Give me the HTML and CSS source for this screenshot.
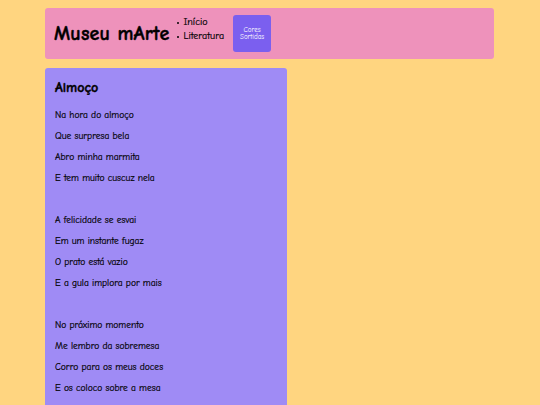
FILE: index.html
```html
<!DOCTYPE html>
<html lang="pt-BR">
<head>
<meta charset="utf-8">
<title>Museu mArte</title>
<link rel="stylesheet" href="styles.css">
</head>
<body>
<div class="page">
  <header class="header">
    <h1 class="title">Museu mArte</h1>
    <ul class="nav">
      <li>Início</li>
      <li>Literatura</li>
    </ul>
    <button class="btn">Cores<br>Sortidas</button>
  </header>
  <main class="card">
    <h2 class="card-title">Almoço</h2>
    <div class="stanza">
      <p>Na hora do almoço</p>
      <p>Que surpresa bela</p>
      <p>Abro minha marmita</p>
      <p>E tem muito cuscuz nela</p>
    </div>
    <div class="stanza">
      <p>A felicidade se esvai</p>
      <p>Em um instante fugaz</p>
      <p>O prato está vazio</p>
      <p>E a gula implora por mais</p>
    </div>
    <div class="stanza">
      <p>No próximo momento</p>
      <p>Me lembro da sobremesa</p>
      <p>Corro para os meus doces</p>
      <p>E os coloco sobre a mesa</p>
    </div>
  </main>
</div>
</body>
</html>
```
FILE: styles.css
```css
html, body {
  margin: 0;
  padding: 0;
  background: #ffd580;
  font-family: "Comic Sans MS", "Comic Neue", "Chalkboard SE", cursive;
  color: #000;
}
.page {
  padding: 8px 46px 0 45px;
  display: flex;
  flex-direction: column;
  gap: 9px;
}
.header {
  background: #ee92bb;
  border-radius: 3px;
  height: 51px;
  box-sizing: border-box;
  display: flex;
  align-items: center;
  padding: 0 9px;
}
.title {
  margin: 0;
  font-size: 20px;
  font-weight: bold;
  letter-spacing: 0.2px;
  -webkit-text-stroke: 0.4px #000;
}
.nav {
  margin: 7px 0 0 7px;
  padding: 0 0 0 7px;
  font-size: 10px;
  line-height: 14px;
  align-self: flex-start;
  -webkit-text-stroke: 0.2px #000;
}
.nav li {
  list-style: none;
  position: relative;
}
.nav li::before {
  content: "";
  position: absolute;
  left: -6px;
  top: 7px;
  width: 2px;
  height: 2px;
  background: #000;
  border-radius: 50%;
}
.btn {
  margin-left: 9px;
  width: 38px;
  height: 37px;
  border: none;
  border-radius: 3px;
  background: #7b5fef;
  color: #fff;
  font-family: inherit;
  font-size: 7px;
  line-height: 7px;
  padding: 0;
}
.card {
  width: 242px;
  background: #9f8bf5;
  border-radius: 3px 3px 0 0;
  padding: 12px 10px 10px;
  box-sizing: border-box;
}
.card-title {
  margin: 0 0 8px;
  font-size: 14px;
  line-height: 16px;
  font-weight: bold;
  -webkit-text-stroke: 0.4px #000;
}
.stanza {
  margin-bottom: 21px;
}
.stanza p {
  margin: 0;
  font-size: 9.5px;
  line-height: 21px;
  -webkit-text-stroke: 0.2px #000;
}
```
